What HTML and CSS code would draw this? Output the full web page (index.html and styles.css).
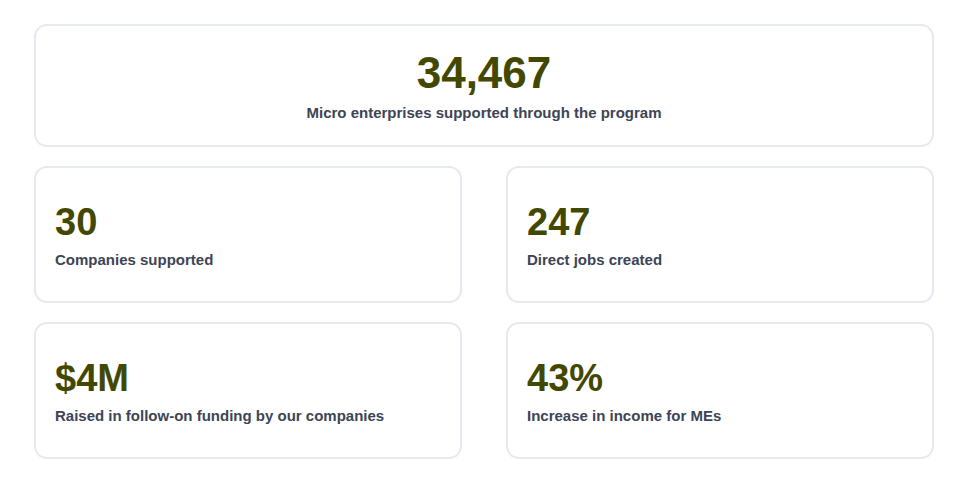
FILE: index.html
```html
<!DOCTYPE html>
<html lang="en">
<head>
<meta charset="utf-8">
<title>Impact</title>
<link rel="stylesheet" href="styles.css">
</head>
<body>
<main class="stats">
  <section class="card card-wide">
    <div class="value">34,467</div>
    <div class="label">Micro enterprises supported through the program</div>
  </section>
  <div class="grid">
    <section class="card">
      <div class="value value-sm">30</div>
      <div class="label">Companies supported</div>
    </section>
    <section class="card">
      <div class="value value-sm">247</div>
      <div class="label">Direct jobs created</div>
    </section>
    <section class="card">
      <div class="value value-sm">$4M</div>
      <div class="label">Raised in follow-on funding by our companies</div>
    </section>
    <section class="card">
      <div class="value value-sm">43%</div>
      <div class="label">Increase in income for MEs</div>
    </section>
  </div>
</main>
</body>
</html>
```
FILE: styles.css
```css
html, body {
  margin: 0;
  padding: 0;
  background: #ffffff;
}
body {
  font-family: "Liberation Sans", Arial, sans-serif;
}
.stats {
  width: 900px;
  margin: 24px 0 0 34px;
  display: flex;
  flex-direction: column;
  gap: 19px;
}
.card {
  box-sizing: border-box;
  border: 2px solid #e6e9f1;
  border-radius: 13px;
  background: #fff;
  height: 137px;
  padding: 0 19px;
  display: flex;
  flex-direction: column;
  justify-content: center;
}
.card-wide {
  height: 123px;
  align-items: center;
  text-align: center;
}
.grid {
  display: grid;
  grid-template-columns: 428px 428px;
  column-gap: 44px;
  row-gap: 19px;
}
.value {
  color: #434800;
  font-weight: 700;
  font-size: 44px;
  line-height: 48px;
}
.value-sm {
  font-size: 38px;
  line-height: 44px;
}
.label {
  color: #3d4555;
  font-weight: 700;
  font-size: 15px;
  line-height: 20px;
  margin-top: 6px;
}
```
